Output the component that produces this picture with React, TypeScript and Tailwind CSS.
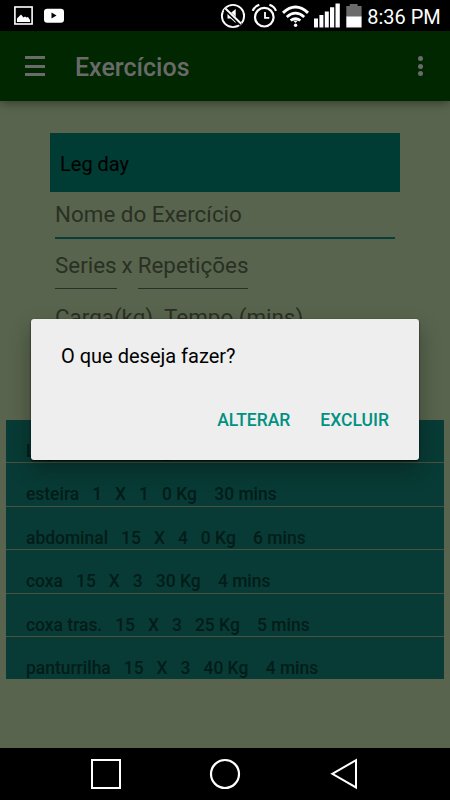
import { ReactNode } from 'react';

// One saved exercise of the current workout
type Exercise = {
  name: string;
  series: number;
  reps: number;
  weight: number;
  minutes: number;
};

const exercises: Exercise[] = [
  { name: 'Leg', series: 1, reps: 1, weight: 0, minutes: 5 },
  { name: 'esteira', series: 1, reps: 1, weight: 0, minutes: 30 },
  { name: 'abdominal', series: 15, reps: 4, weight: 0, minutes: 6 },
  { name: 'coxa', series: 15, reps: 3, weight: 30, minutes: 4 },
  { name: 'coxa tras.', series: 15, reps: 3, weight: 25, minutes: 5 },
  { name: 'panturrilha', series: 15, reps: 3, weight: 40, minutes: 4 },
];

function StatusBar() {
  return (
    <div className="flex h-[31px] shrink-0 bg-black text-white">
      <svg width="450" height="31" viewBox="0 0 450 31" fill="none" stroke="#fff">
        {/* Picture */}
        <rect x="14.9" y="7" width="17.2" height="17" strokeWidth="1.6" />
        <path d="M17 22v-3.5l4-4 2.5 3 1.5-1 1.5 1 1.5-.5 2 3v2z" fill="#fff" stroke="none" />
        {/* Video */}
        <rect x="44" y="8.8" width="20" height="14" rx="3.2" fill="#fff" stroke="none" />
        <path d="M51.5 12.6v5.8l5-2.9z" fill="#000" stroke="none" />
        {/* Muted */}
        <circle cx="233" cy="16" r="11.1" strokeWidth="1.9" />
        <path d="M227.5 13h3.2l5-4v14l-5-4.5h-3.2z" fill="#fff" stroke="none" />
        <path d="M224.9 8.9l16 15.6" stroke="#000" strokeWidth="3.6" />
        <path d="M225.2 8.2l16 15.6" strokeWidth="1.9" />
        {/* Alarm */}
        <circle cx="264.3" cy="17.2" r="9.3" strokeWidth="2.2" />
        <path d="M265 12v5.8h4.3" strokeWidth="1.8" />
        <path d="M252.7 10.8q1.8-4.4 6.6-6M276 10.8q-1.8-4.4-6.6-6" strokeWidth="2.2" />
        {/* Wifi */}
        <path d="M283 12.8q12.5-11.5 25 0" strokeWidth="3" />
        <path d="M286.8 16.9q8.7-7.5 17.4 0" strokeWidth="2.7" />
        <path d="M290.6 20.6q4.9-4 9.8 0" strokeWidth="2.6" />
        <path d="M293 20.4h5l-2.5 2.6z" fill="#fff" stroke="none" />
        <circle cx="295.6" cy="25.2" r="1.7" fill="#fff" stroke="none" />
        {/* Signal */}
        <path d="M314 18.5h4V27.5h-4zM319.4 15h4V27.5h-4zM324.8 11.5h4V27.5h-4zM330 7.3h4.2V27.5H330zM335.5 3.6h4.3V27.5h-4.3z" fill="#fff" stroke="none" />
        {/* Battery */}
        <path d="M346.3 6h3.5V4h7.8v2h4v11h-15.3z" fill="#6b6b6b" stroke="none" />
        <path d="M346.3 16.5h15.3v11h-15.3z" fill="#fff" stroke="none" />
        <text x="367.3" y="23.6" fontSize="20.2" textLength="73.5" lengthAdjust="spacingAndGlyphs" fill="#fff" stroke="none">8:36 PM</text>
      </svg>
    </div>
  );
}

function Toolbar() {
  return (
    <header className="relative flex h-[70px] shrink-0 items-center bg-[#012701] pl-[25px] pr-[27.5px] shadow-[0_2px_9px_rgba(0,0,0,0.4)]">
      <button aria-label="Menu" className="flex w-5 flex-col gap-[5.5px]">
        <span className="h-[3px] bg-[#6a6a6a]" />
        <span className="h-[3px] bg-[#6a6a6a]" />
        <span className="h-[3px] bg-[#6a6a6a]" />
      </button>
      <h1 className="ml-[30px] mt-[3px] flex-1 text-[25px] font-medium text-[#6a6a6a]">Exercícios</h1>
      <button aria-label="Mais" className="flex flex-col gap-[2.5px]">
        <span className="size-[5px] rounded-full bg-[#6a6a6a]" />
        <span className="size-[5px] rounded-full bg-[#6a6a6a]" />
        <span className="size-[5px] rounded-full bg-[#6a6a6a]" />
      </button>
    </header>
  );
}

function Field({ children }: { children: ReactNode }) {
  return <span className="border-b border-[#293023] pb-[10px]">{children}</span>;
}

function WorkoutForm() {
  return (
    <form className="mx-[50px] mt-8 text-[22.4px] leading-[26px] text-[#293023]">
      <div className="flex h-[59px] items-center bg-[#003b34] pl-2.5 pt-0.5 text-[20px] text-black">Leg day</div>
      <div className="mx-[5px] mt-[9px] border-b-2 border-[#083f3a] pb-[10px]">Nome do Exercício</div>
      <div className="mx-[5px] mt-[13px] flex whitespace-pre">
        <Field>Series</Field>
        <span className="w-[21px] text-center">x</span>
        <Field>Repetições</Field>
      </div>
      <div className="mx-[5px] mt-[15px] flex gap-[11px]">
        <Field>Carga(kg)</Field>
        <Field>Tempo (mins)</Field>
      </div>
    </form>
  );
}

function ExerciseList() {
  return (
    <ul className="mx-1.5 mt-auto mb-[69px] text-[17.45px] font-medium text-[#021d19]">
      {exercises.map((item) => (
        <li
          key={item.name}
          className="h-[43.4px] overflow-hidden whitespace-pre border-b border-[#49523f] bg-[#083b35] pl-5 pt-5 leading-[22px] last:h-[42.1px] last:border-b-0"
        >
          {`${item.name}   ${item.series}   X   ${item.reps}   ${item.weight} Kg    ${item.minutes} mins`}
        </li>
      ))}
    </ul>
  );
}

function ActionDialog() {
  return (
    <div
      role="dialog"
      className="absolute left-[31px] top-[319px] flex h-[140.5px] w-[388px] flex-col rounded-[3px] bg-[#eeeeee] px-[30px] pt-[25px] shadow-[0_1px_2px_rgba(0,0,0,0.8),0_10px_22px_rgba(0,0,0,0.3)]"
    >
      <p className="text-[20px] leading-6 text-black">O que deseja fazer?</p>
      <div className="mt-10 flex justify-end gap-[30px] text-[17.5px] font-medium leading-6 text-[#009182]">
        <button>ALTERAR</button>
        <button>EXCLUIR</button>
      </div>
    </div>
  );
}

function NavigationBar() {
  return (
    <nav className="flex h-[52px] shrink-0 justify-center bg-black">
      <svg width="450" height="52" viewBox="0 0 450 52" fill="none" stroke="#fff" strokeWidth="2">
        <rect x="92" y="12" width="28" height="28" />
        <circle cx="225" cy="26" r="14" strokeWidth="2.2" />
        <path d="M332.3 25.8L356 12.2v27.2z" />
      </svg>
    </nav>
  );
}

export default function App() {
  return (
    <div className="relative flex h-[800px] w-[450px] flex-col overflow-hidden bg-[#58644d] font-[Roboto,sans-serif]">
      <StatusBar />
      <Toolbar />
      <main className="flex min-h-0 flex-1 flex-col">
        <WorkoutForm />
        <ExerciseList />
      </main>
      <NavigationBar />
      <ActionDialog />
    </div>
  );
}
